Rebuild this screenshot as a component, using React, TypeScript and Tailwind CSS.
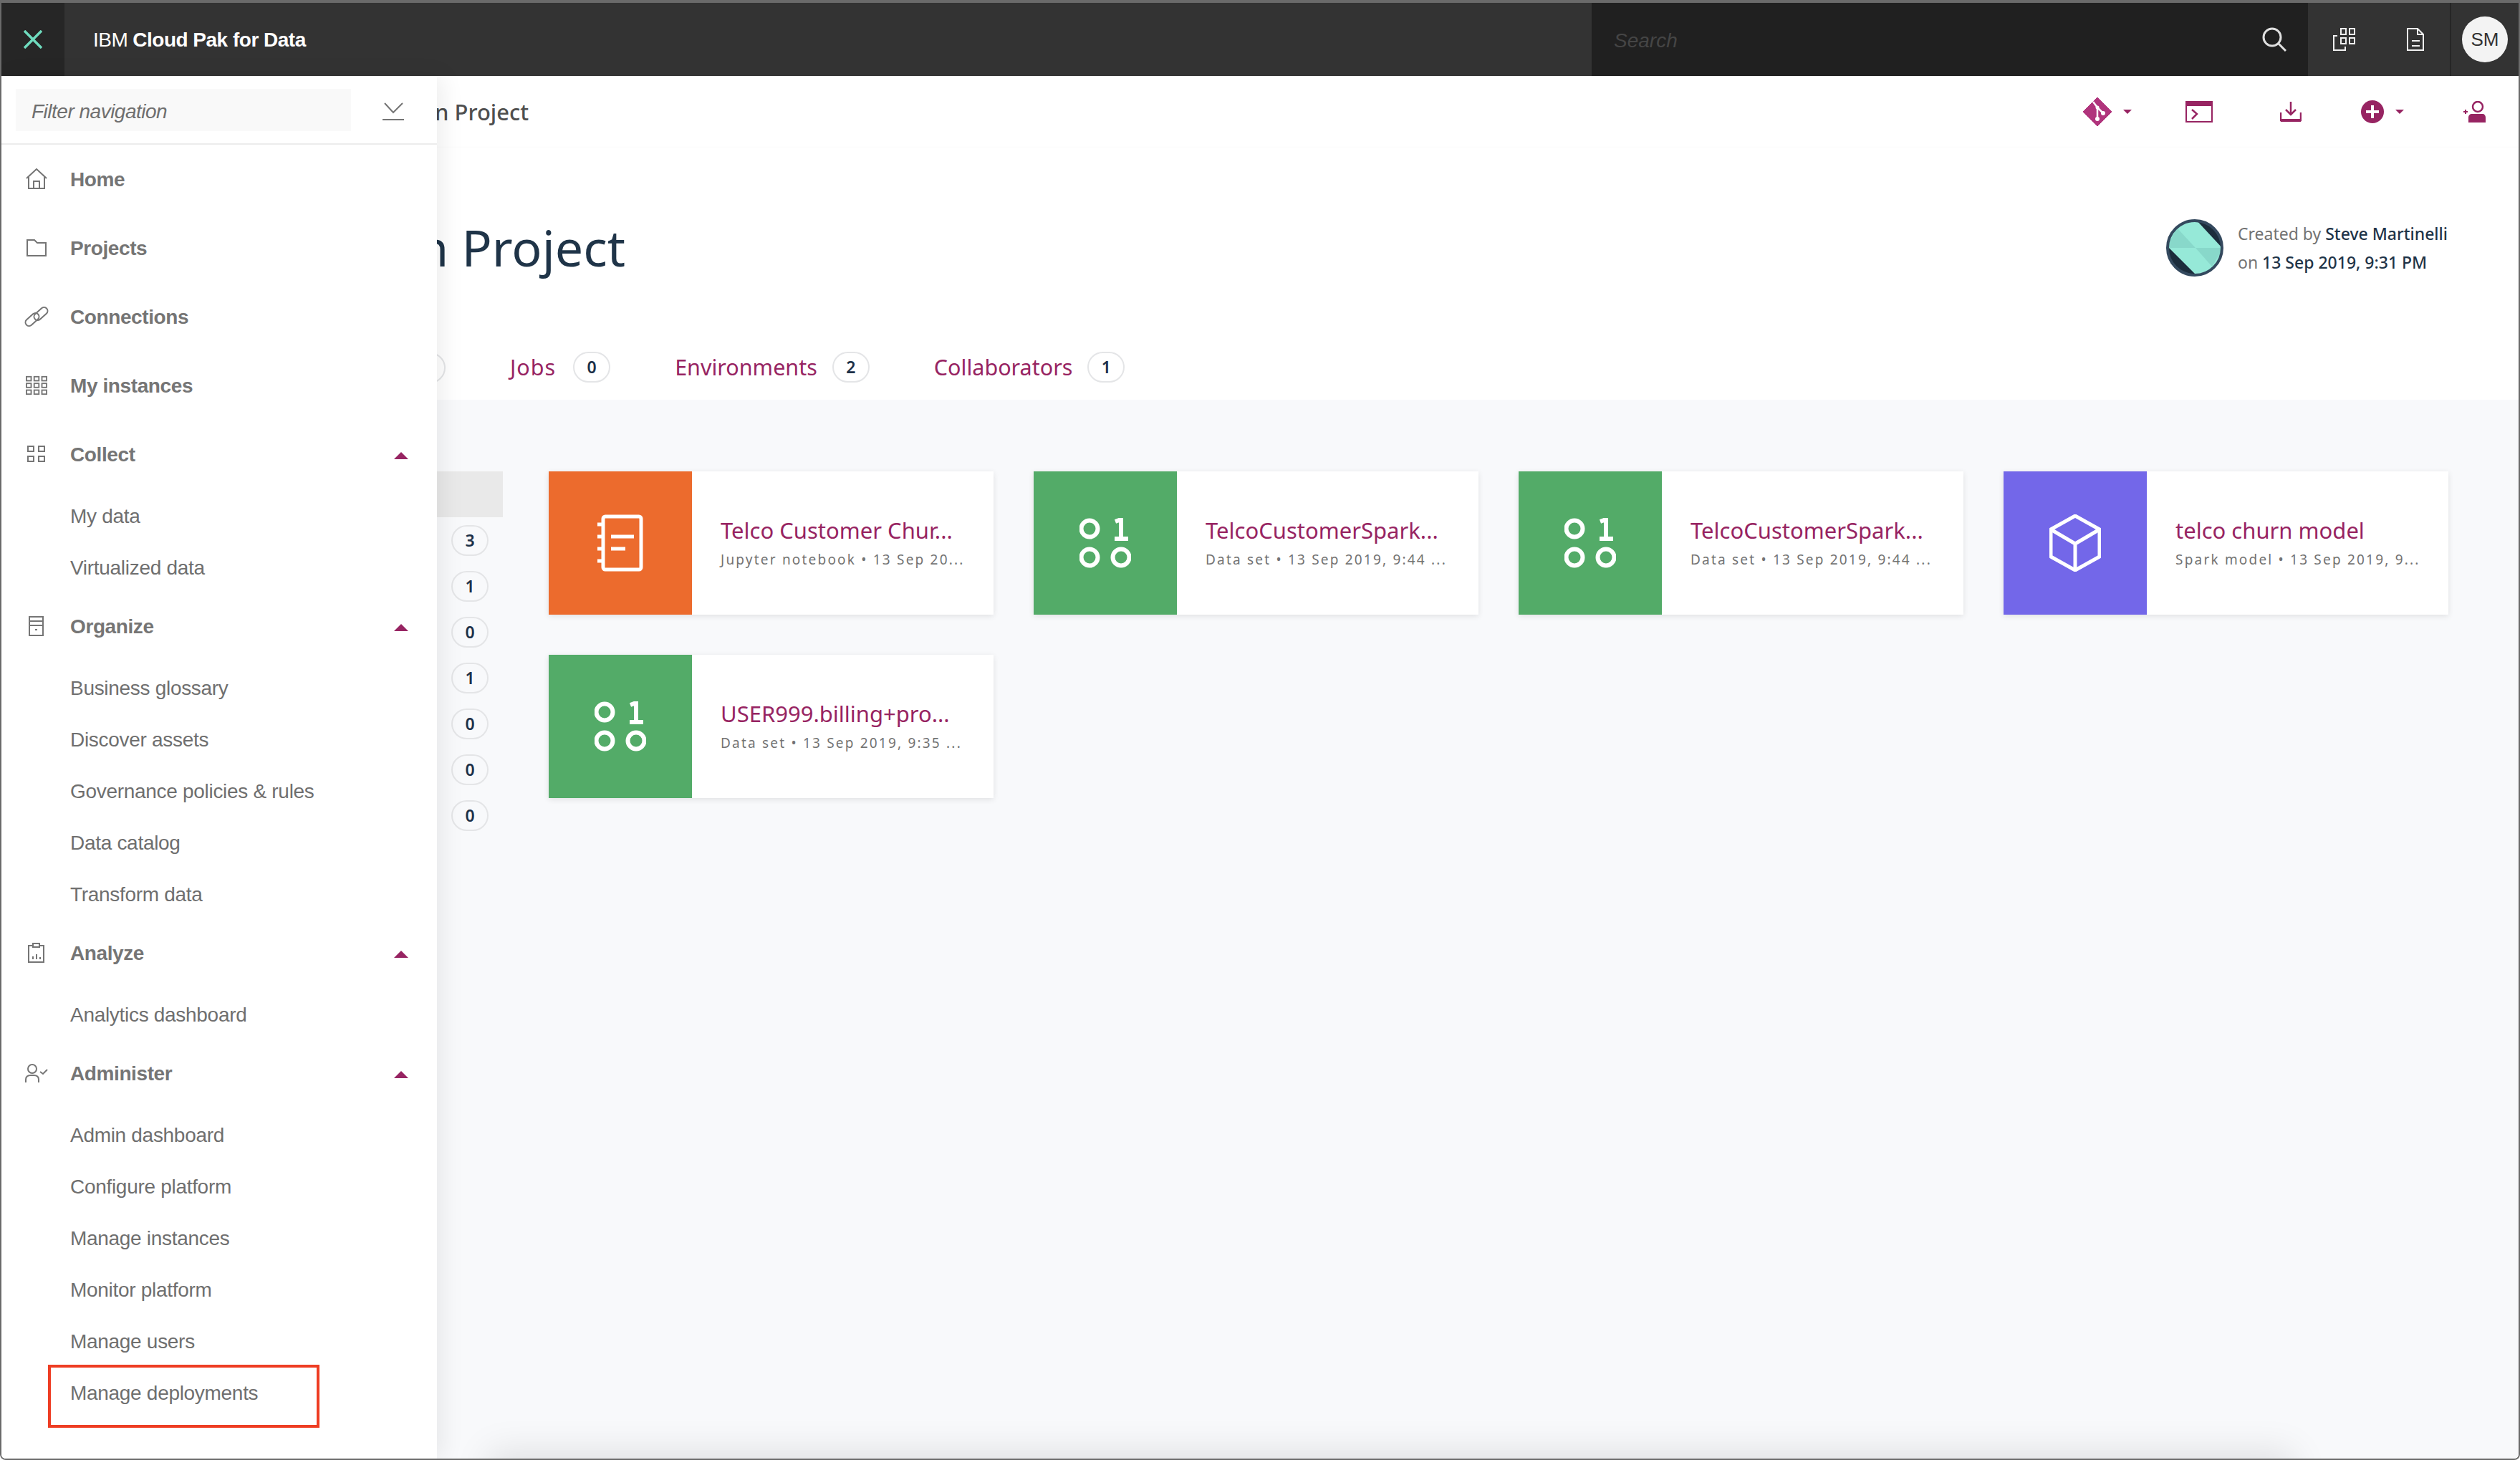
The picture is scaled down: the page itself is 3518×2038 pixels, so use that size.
import React from "react";

const SANS = "font-['Liberation_Sans',Arial,sans-serif]";
const PLEX = "font-['Noto_Sans','Open_Sans',sans-serif]";

function Caret() {
  return (
    <svg width="20" height="10" viewBox="0 0 20 10" className="shrink-0">
      <path d="M10 0 L20 10 L0 10 Z" fill="#972462" />
    </svg>
  );
}

function SmallCaret() {
  return (
    <svg width="12" height="6" viewBox="0 0 12 6" className="shrink-0">
      <path d="M0 0 L12 0 L6 6 Z" fill="#972462" />
    </svg>
  );
}

const navStroke = { fill: "none", stroke: "#757575", strokeWidth: 2 };

function HomeIcon() {
  return (
    <svg width="32" height="30" viewBox="0 0 32 30" {...navStroke}>
      <path d="M2 14 L16 1 L30 14" />
      <path d="M5 11 V28 H27 V11" />
      <path d="M12 28 V18 H20 V28" />
    </svg>
  );
}
function FolderIcon() {
  return (
    <svg width="30" height="26" viewBox="0 0 30 26" {...navStroke}>
      <path d="M2 24 V2 H12 L16 6 H28 V24 Z" />
    </svg>
  );
}
function LinkIcon() {
  return (
    <svg width="34" height="28" viewBox="0 0 34 28" {...navStroke}>
      <rect x="0" y="13" width="22" height="10" rx="5" transform="rotate(-42 11 18)" />
      <rect x="12" y="5" width="22" height="10" rx="5" transform="rotate(-42 23 10)" />
    </svg>
  );
}
function GridIcon() {
  const cells = [];
  for (let r = 0; r < 3; r++)
    for (let c = 0; c < 3; c++)
      cells.push(<rect key={r + "-" + c} x={1 + c * 11.5} y={1 + r * 10} width="7" height="6" />);
  return (
    <svg width="30" height="28" viewBox="0 0 32 28" {...navStroke}>
      {cells}
    </svg>
  );
}
function CollectIcon() {
  return (
    <svg width="26" height="24" viewBox="0 0 26 24" {...navStroke}>
      <rect x="1" y="1" width="8" height="7" />
      <rect x="16" y="1" width="8" height="7" />
      <rect x="1" y="15" width="8" height="7" />
      <rect x="16" y="15" width="8" height="7" />
    </svg>
  );
}
function OrganizeIcon() {
  return (
    <svg width="22" height="28" viewBox="0 0 22 28" {...navStroke}>
      <rect x="1" y="1" width="19" height="26" />
      <path d="M1 7 H20 M1 13 H20" />
      <path d="M9 19 H12" />
    </svg>
  );
}
function AnalyzeIcon() {
  return (
    <svg width="24" height="28" viewBox="0 0 24 28" {...navStroke}>
      <rect x="1" y="4" width="21" height="23" />
      <rect x="7" y="1" width="9" height="5" fill="#fff" />
      <path d="M7 23 V19 M12 23 V16 M17 23 V20" />
    </svg>
  );
}
function AdminIcon() {
  return (
    <svg width="32" height="28" viewBox="0 0 32 28" {...navStroke}>
      <circle cx="10" cy="8" r="6" />
      <path d="M1 27 V23 C1 19 4 17 8 17 H12 C16 17 19 19 19 23 V27" />
      <path d="M21 12 L25 15 L31 9" />
    </svg>
  );
}

function NavHead({ icon, label, caret }: { icon: React.ReactNode; label: string; caret?: boolean }) {
  return (
    <div className="h-[96px] flex items-center">
      <div className="w-[96px] pl-[2px] flex justify-center shrink-0">{icon}</div>
      <span className="font-bold text-[28px] tracking-[-0.4px] pt-[1px] text-[#757575] flex-1">{label}</span>
      {caret && (
        <span className="mr-[40px] mt-[4px]">
          <Caret />
        </span>
      )}
    </div>
  );
}

function NavSub({ items }: { items: string[] }) {
  return (
    <div className="pt-[2px] -mb-[2px]">
      {items.map((t) => (
        <div key={t} className="h-[72px] flex items-center pl-[96px] pt-[2px] text-[28px] tracking-[-0.3px] text-[#6f6f6f]">
          {t}
        </div>
      ))}
    </div>
  );
}

function Sidebar() {
  return (
    <aside
      className={`absolute left-0 top-[102px] bottom-0 w-[608px] bg-white shadow-[8px_0_30px_rgba(0,0,0,0.07)] ${SANS}`}
    >
      <div className="h-[96px] flex items-start border-b-2 border-[#ececec] pl-[20px] pt-[18px]">
        <div className="w-[468px] h-[59px] bg-[#f9f9f9] flex items-center pl-[22px] pt-[4px] text-[28px] italic tracking-[-0.5px] text-[#6f6f6f]">
          Filter navigation
        </div>
        <svg width="30" height="26" viewBox="0 0 30 26" className="ml-[44px] mt-[19px]" fill="none" stroke="#757575" strokeWidth="2">
          <path d="M3 1 L15 14 L28 1" />
          <path d="M0 24 H30" />
        </svg>
      </div>
      <NavHead icon={<HomeIcon />} label="Home" />
      <NavHead icon={<FolderIcon />} label="Projects" />
      <NavHead icon={<LinkIcon />} label="Connections" />
      <NavHead icon={<GridIcon />} label="My instances" />
      <NavHead icon={<CollectIcon />} label="Collect" caret />
      <NavSub items={["My data", "Virtualized data"]} />
      <NavHead icon={<OrganizeIcon />} label="Organize" caret />
      <NavSub items={["Business glossary", "Discover assets", "Governance policies & rules", "Data catalog", "Transform data"]} />
      <NavHead icon={<AnalyzeIcon />} label="Analyze" caret />
      <NavSub items={["Analytics dashboard"]} />
      <NavHead icon={<AdminIcon />} label="Administer" caret />
      <NavSub items={["Admin dashboard", "Configure platform", "Manage instances", "Monitor platform", "Manage users", "Manage deployments"]} />
      <div className="absolute left-[65px] top-[1799px] w-[379px] h-[88px] border-[4px] border-[#ee3d23]" />
    </aside>
  );
}

function Header() {
  return (
    <header className={`h-[102px] bg-[#333333] flex shrink-0 ${SANS}`}>
      <div className="w-[88px] bg-[#262626] flex items-center justify-center">
        <svg width="26" height="26" viewBox="0 0 26 26" fill="none" stroke="#6fdcbf" strokeWidth="3.5">
          <path d="M1 1 L25 25 M25 1 L1 25" />
        </svg>
      </div>
      <div className="w-[2132px] pl-[40px] pt-[2px] flex items-center text-[28px] text-white tracking-[-0.5px]">
        <span className="font-light mr-[7px]">IBM</span>
        <span className="font-bold">Cloud Pak for Data</span>
      </div>
      <div className="w-[1000px] bg-[#202020] flex items-center justify-between pl-[31px] pr-[30px]">
        <span className="italic text-[28px] pt-[4px] text-[#454545]">Search</span>
        <svg width="34" height="34" viewBox="0 0 34 34" fill="none" stroke="#e0e0e0" strokeWidth="3">
          <circle cx="14" cy="14" r="12" />
          <path d="M23 23 L33 33" />
        </svg>
      </div>
      <div className="flex-1 flex items-center">
        <svg width="32" height="32" viewBox="0 0 32 32" className="ml-[34px]" fill="none" stroke="#f0f0f0" strokeWidth="2">
          <rect x="12" y="1" width="7" height="8" />
          <rect x="24" y="1" width="7" height="8" />
          <rect x="12" y="14" width="7" height="8" />
          <rect x="24" y="14" width="7" height="8" />
          <path d="M7 11 H2 V31 H18 V26" />
        </svg>
        <svg width="24" height="32" viewBox="0 0 24 32" className="ml-[72px]" fill="none" stroke="#f0f0f0" strokeWidth="2">
          <path d="M1 1 H15 L23 9 V31 H1 Z" />
          <path d="M15 1 V9 H23" />
          <path d="M7 18 H18 M7 25 H18" />
        </svg>
        <div className="ml-[36px] w-[2px] h-full bg-[#262626]" />
        <div className="ml-[15px] w-[64px] h-[64px] rounded-full bg-[#f3f3f3] flex items-center justify-center text-[26px] text-[#333333]">
          SM
        </div>
      </div>
    </header>
  );
}

function Toolbar() {
  return (
    <div className="h-[100px] shrink-0 bg-white flex items-center justify-between shadow-[0_2px_4px_rgba(0,0,0,0.12)] relative">
      <span className={`ml-[605px] text-[31px] font-medium text-[#4f4f4f] ${PLEX}`}>n Project</span>
      <div className="flex items-center pr-[46px]">
        <svg width="40" height="40" viewBox="0 0 40 40">
          <path d="M20 0 L40 20 L20 40 L0 20 Z" fill="#b0347c" stroke="#b0347c" strokeWidth="1" strokeLinejoin="round" />
          <path d="M14 6 L20 14 V29 M20 14 L28 22" stroke="#fff" strokeWidth="2.5" fill="none" />
          <circle cx="20" cy="30" r="3" fill="#fff" />
          <circle cx="28" cy="22" r="3" fill="#fff" />
          <circle cx="20" cy="14" r="2.5" fill="#fff" />
        </svg>
        <span className="ml-[16px]"><SmallCaret /></span>
        <svg width="38" height="30" viewBox="0 0 38 30" className="ml-[75px]">
          <rect x="1" y="1" width="36" height="28" fill="none" stroke="#972462" strokeWidth="2" />
          <rect x="0" y="0" width="38" height="7" fill="#972462" />
          <path d="M9 12 L16 18 L9 25" fill="none" stroke="#972462" strokeWidth="2.5" />
        </svg>
        <svg width="30" height="28" viewBox="0 0 30 28" className="ml-[94px]" fill="none" stroke="#972462" strokeWidth="2.5">
          <path d="M15 0 V18 M8 11 L15 18 L22 11" />
          <path d="M1 15 V26 H29 V15" />
          <path d="M1 26 H29" strokeWidth="4" />
        </svg>
        <svg width="32" height="32" viewBox="0 0 32 32" className="ml-[83px]">
          <circle cx="16" cy="16" r="16" fill="#972462" />
          <path d="M16 7 V25 M7 16 H25" stroke="#fff" strokeWidth="4" />
        </svg>
        <span className="ml-[16px]"><SmallCaret /></span>
        <svg width="31" height="30" viewBox="0 0 31 30" className="ml-[83px]">
          <circle cx="20" cy="8" r="7" fill="none" stroke="#972462" strokeWidth="2.5" />
          <path d="M7 30 V23 C7 20 9 18 12 18 H27 C29 18 31 20 31 23 V30 Z" fill="#972462" />
          <path d="M0 15 H6 M3 12 V18" stroke="#972462" strokeWidth="2" />
        </svg>
      </div>
    </div>
  );
}

function Avatar() {
  return (
    <svg width="80" height="80" viewBox="0 0 80 80" className="shrink-0">
      <defs>
        <clipPath id="av">
          <circle cx="40" cy="40" r="37" />
        </clipPath>
      </defs>
      <g clipPath="url(#av)">
        <rect width="80" height="80" fill="#96e9d8" />
        <path d="M0 40 L15 12 L41 40 Z" fill="#88d8ca" />
        <path d="M41 40 L80 40 L64 66 Z" fill="#88d8ca" />
        <path d="M41 0 L80 0 L80 42 Z" fill="#1c2d3c" />
        <path d="M0 36 L44 80 L0 80 Z" fill="#1c2d3c" />
      </g>
      <circle cx="40" cy="40" r="38" fill="none" stroke="#34495e" strokeWidth="4" />
    </svg>
  );
}

function Badge({ n }: { n?: string }) {
  return (
    <span className={`w-[52px] h-[43px] rounded-full border-2 border-[#e4e5e7] flex items-center justify-center text-[23px] font-semibold text-[#1c3048] shrink-0 ${PLEX}`}>
      {n}
    </span>
  );
}

function Tab({ label, n, ml, gap = "ml-[21px]", track = "" }: { label: string; n: string; ml: string; gap?: string; track?: string }) {
  return (
    <div className={`flex items-center ${ml}`}>
      <span className={`text-[30.5px] text-[#972462] ${track} ${PLEX}`}>{label}</span>
      <span className={`${gap} -mt-[2px]`}><Badge n={n} /></span>
    </div>
  );
}

function TitleBlock() {
  return (
    <section className="h-[352px] shrink-0 bg-white shadow-[0_2px_4px_rgba(0,0,0,0.12)] relative flex flex-col justify-between">
      <div className="flex justify-between pt-[100px] pr-[99px]">
        <h1 className={`ml-[581px] text-[70px] leading-[80px] text-[#1f3448] -mt-[1px] ${PLEX}`}>n Project</h1>
        <div className="flex items-center">
          <Avatar />
          <div className={`ml-[20px] text-[23px] leading-[40px] text-[#737373] ${PLEX}`}>
            <div>Created by <span className="font-medium text-[#1f3448]">Steve Martinelli</span></div>
            <div>on <span className="font-medium text-[#1f3448]">13 Sep 2019, 9:31 PM</span></div>
          </div>
        </div>
      </div>
      <div className="flex items-center pl-[568px] pb-[22px]">
        <Badge />
        <Tab label="Jobs" n="0" ml="ml-[90px]" gap="ml-[24px]" track="tracking-[1px]" />
        <Tab label="Environments" n="2" ml="ml-[90px]" />
        <Tab label="Collaborators" n="1" ml="ml-[90px]" />
      </div>
    </section>
  );
}

function Binary() {
  return (
    <svg width="72" height="70" viewBox="0 0 72 70" fill="none" stroke="#fff" strokeWidth="6">
      <circle cx="14" cy="15" r="11.5" />
      <circle cx="14" cy="55" r="11.5" />
      <circle cx="58" cy="55" r="11.5" />
      <path d="M50 5 L58 2 V29 M49 29 H68" />
    </svg>
  );
}

function Notebook() {
  return (
    <svg width="64" height="80" viewBox="0 0 64 80" fill="none" stroke="#fff" strokeWidth="5">
      <rect x="8" y="3" width="53" height="74" rx="3" />
      <path d="M0 14 H8 M0 31 H8 M0 48 H8 M0 65 H8" />
      <path d="M19 31 H51 M19 48 H39" />
    </svg>
  );
}

function Cube() {
  return (
    <svg width="72" height="80" viewBox="0 0 72 80" fill="none" stroke="#fff" strokeWidth="5" strokeLinejoin="round">
      <path d="M36 2 L70 21 V59 L36 78 L2 59 V21 Z" />
      <path d="M2 21 L36 41 L70 21 M36 41 V78" />
    </svg>
  );
}

function Card({ color, icon, title, sub }: { color: string; icon: React.ReactNode; title: string; sub: string }) {
  return (
    <div className="h-[200px] bg-white flex shadow-[0_2px_8px_rgba(0,0,0,0.1)]">
      <div className={`w-[200px] h-full flex items-center justify-center shrink-0 ${color}`}>{icon}</div>
      <div className={`pl-[40px] pt-[62px] ${PLEX} whitespace-nowrap`}>
        <div className="text-[31px] leading-[40px] text-[#972462]">{title}</div>
        <div className="text-[19px] leading-[24px] mt-[9px] tracking-[2.2px] text-[#737373]">{sub}</div>
      </div>
    </div>
  );
}

function Body() {
  return (
    <main className="flex-1 bg-[#f8f9fb] flex items-start pt-[100px] pr-[98px] relative overflow-hidden">
      <div className="w-[700px] shrink-0 flex flex-col">
        <div className="h-[64px] bg-[#e9e9e9] w-full" />
        <div className="flex flex-col items-end pr-[20px] pt-[11px] gap-[21px]">
          {["3", "1", "0", "1", "0", "0", "0"].map((n, i) => (
            <Badge key={i} n={n} />
          ))}
        </div>
      </div>
      <div className="flex-1 ml-[64px] grid grid-cols-4 gap-x-[56px] gap-y-[56px]">
        <Card color="bg-[#ec6b2d]" icon={<Notebook />} title="Telco Customer Chur..." sub="Jupyter notebook • 13 Sep 20..." />
        <Card color="bg-[#53ab68]" icon={<Binary />} title="TelcoCustomerSpark..." sub="Data set • 13 Sep 2019, 9:44 ..." />
        <Card color="bg-[#53ab68]" icon={<Binary />} title="TelcoCustomerSpark..." sub="Data set • 13 Sep 2019, 9:44 ..." />
        <Card color="bg-[#7367e9]" icon={<Cube />} title="telco churn model" sub="Spark model • 13 Sep 2019, 9..." />
        <Card color="bg-[#53ab68]" icon={<Binary />} title="USER999.billing+pro..." sub="Data set • 13 Sep 2019, 9:35 ..." />
      </div>
      <div className="absolute left-[690px] top-full w-[2500px] h-[40px] shadow-[0_0_50px_10px_rgba(0,0,0,0.1)]" />
    </main>
  );
}

export default function App() {
  return (
    <div className="w-[3518px] h-[2038px] bg-white box-border border-2 border-t-4 border-[#6a6a6a] rounded-b-[8px] relative overflow-hidden flex flex-col">
      <Header />
      <Toolbar />
      <TitleBlock />
      <Body />
      <Sidebar />
    </div>
  );
}
